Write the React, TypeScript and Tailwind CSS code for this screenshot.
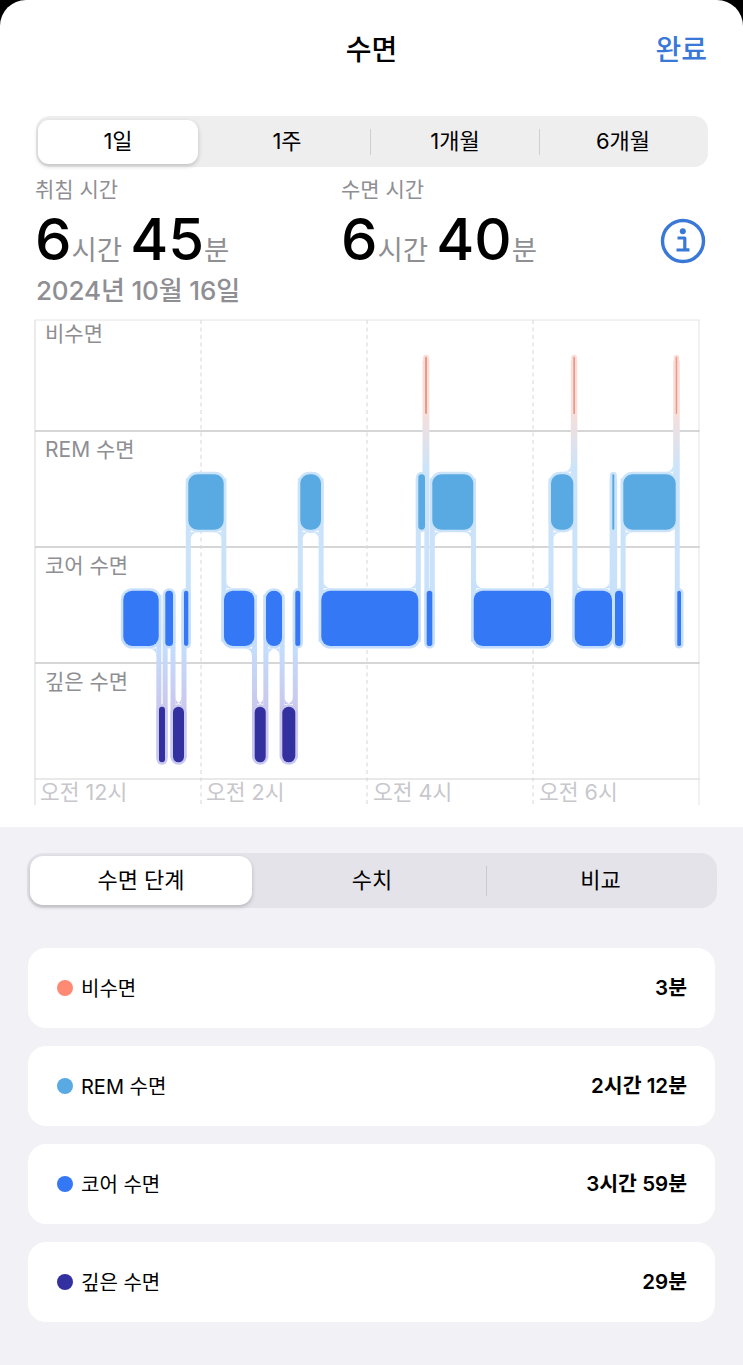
const F = 'font-["Inter","Noto_Sans_CJK_KR",sans-serif]';
import type { ReactNode } from "react";

type Seg = { r: number; a: number; b: number };
const ROWS = [
  { t: 356.7, h: 57.3, c: "#e89a8b" },
  { t: 474.3, h: 55.4, c: "#59aae2" },
  { t: 590.7, h: 55.3, c: "#3478f6" },
  { t: 706.7, h: 55.6, c: "#33309f" },
];
const SEGS: Seg[] = [
  { r: 2, a: 123.3, b: 158.7 }, { r: 3, a: 159, b: 165 }, { r: 2, a: 165.3, b: 173 },
  { r: 3, a: 173, b: 184 }, { r: 2, a: 184, b: 188.3 }, { r: 1, a: 188.3, b: 223.7 },
  { r: 2, a: 224, b: 254.3 }, { r: 3, a: 254.7, b: 265.7 }, { r: 2, a: 266, b: 282 },
  { r: 3, a: 282.3, b: 295.3 }, { r: 2, a: 295.3, b: 300.3 }, { r: 1, a: 300.3, b: 321 },
  { r: 2, a: 321.3, b: 418.3 }, { r: 1, a: 418.3, b: 425 }, { r: 0, a: 425, b: 427 },
  { r: 2, a: 426.7, b: 432.3 }, { r: 1, a: 432.3, b: 473.3 }, { r: 2, a: 473.7, b: 551 },
  { r: 1, a: 551, b: 573.3 }, { r: 0, a: 573.3, b: 575 }, { r: 2, a: 574.7, b: 612 },
  { r: 1, a: 612.3, b: 614.3 }, { r: 2, a: 615, b: 623 }, { r: 1, a: 623.3, b: 675.7 },
  { r: 0, a: 675.7, b: 677.2 }, { r: 2, a: 677.3, b: 681 },
];

function fillet(e: number, h: number, dx: number, dy: number, r = 8) {
  return `M${e} ${h}L${e + dx * r} ${h}Q${e} ${h} ${e} ${h + dy * r}Z`;
}

function SleepChart() {
  const pad = 2.5;
  const yLines = [431, 547, 663];
  const xDash = [201, 367, 533];
  const connectors: ReactNode[] = [];
  const fillets: string[] = [];
  SEGS.forEach((s, i) => {
    const n = SEGS[i + 1];
    if (!n) return;
    const bx = (s.b + n.a) / 2;
    const A = ROWS[s.r];
    const B = ROWS[n.r];
    const top = Math.min(A.t, B.t) + 4;
    const bottom = Math.max(A.t + A.h, B.t + B.h) - 4;
    connectors.push(<rect key={i} x={bx - pad} y={top} width={pad * 2} height={bottom - top} fill="url(#halo)" />);
    const down = n.r > s.r;
    if (s.b - s.a > 8) {
      fillets.push(fillet(bx - pad, (down ? A.t + A.h : A.t) + (down ? pad : -pad), -1, down ? 1 : -1));
    }
    if (n.b - n.a > 8) {
      fillets.push(fillet(bx + pad, (down ? B.t : B.t + B.h) + (down ? -pad : pad), 1, down ? -1 : 1));
    }
  });
  const hours: [number, string][] = [[40, "오전 12시"], [206, "오전 2시"], [373, "오전 4시"], [539, "오전 6시"]];
  const rowLabels: [number, string][] = [[341, "비수면"], [457, "REM 수면"], [573, "코어 수면"], [689, "깊은 수면"]];
  return (
    <svg viewBox="0 310 743 496" width="743" height="496" className="block">
      <defs>
        <linearGradient id="halo" gradientUnits="userSpaceOnUse" x1="0" x2="0" y1="354" y2="765">
          <stop offset="0" stopColor="#fbdcd6" />
          <stop offset="0.14" stopColor="#f8dfda" />
          <stop offset="0.28" stopColor="#cbe4fa" />
          <stop offset="0.55" stopColor="#c9e2fb" />
          <stop offset="0.72" stopColor="#c4dcfd" />
          <stop offset="0.86" stopColor="#c9c8ec" />
          <stop offset="1" stopColor="#c9c8f0" />
        </linearGradient>
      </defs>
      <g stroke="#e4e4e6" strokeWidth="1">
        <line x1="35" x2="699.5" y1="320" y2="320" />
        <line x1="35" x2="35" y1="320" y2="805" strokeWidth="1.5" />
        <line x1="699" x2="699" y1="320" y2="805" />
      </g>
      {yLines.map((y) => <line key={y} x1="35" x2="699.5" y1={y} y2={y} stroke="#c8c8ca" strokeWidth="1.3" />)}
      <line x1="35" x2="699.5" y1="779" y2="779" stroke="#d4d4d6" strokeWidth="1.2" />
      {xDash.map((x) => <line key={x} x1={x} x2={x} y1="320" y2="805" stroke="#d6d6d8" strokeWidth="1" strokeDasharray="4 3.5" />)}
      {connectors}
      <path d={fillets.join("")} fill="url(#halo)" />
      {SEGS.map((s, i) => {
        const R = ROWS[s.r];
        const w = s.b - s.a;
        const p = s.r === 0 ? 1.9 : pad;
        const rad = Math.min(9, w / 2);
        return <rect key={i} x={s.a - p} y={R.t - p} width={w + p * 2} height={R.h + p * 2} rx={rad + p} fill="url(#halo)" />;
      })}
      {SEGS.map((s, i) => {
        const R = ROWS[s.r];
        const w = s.b - s.a;
        return <rect key={i} x={s.a} y={R.t} width={w} height={R.h} rx={Math.min(9, w / 2)} fill={R.c} />;
      })}
      {rowLabels.map(([y, t]) => (
        <text key={t} x="45" y={y} fontSize="21" fill="#8e8e93" fontFamily="Inter, 'Noto Sans CJK KR', sans-serif">{t}</text>
      ))}
      {hours.map(([x, t]) => (
        <text key={t} x={x} y="800" fontSize="21.5" fill="#c7c7cc" fontFamily="Inter, 'Noto Sans CJK KR', sans-serif">{t}</text>
      ))}
    </svg>
  );
}

function InfoIcon() {
  return (
    <svg width="46" height="46" viewBox="0 0 46 46" fill="none">
      <circle cx="23" cy="23" r="20.5" stroke="#3a78d8" strokeWidth="3.4" />
      <circle cx="22.8" cy="13.2" r="3" fill="#3a78d8" />
      <path d="M17.5 20H24.8V31.8H29M16.5 32H29.5" stroke="#3a78d8" strokeWidth="3.2" strokeLinejoin="round" />
    </svg>
  );
}

function Stat({ label, a, b }: { label: string; a: string; b: string }) {
  return (
    <div className="flex flex-col">
      <div className="text-[21px] leading-[26px] text-[#8e8e93]">{label}</div>
      <div className="flex items-baseline mt-[6px] h-[60px]">
        <span className="text-[58px] leading-[60px] font-medium text-black">{a}</span>
        <span className="text-[27.5px] text-[#8e8e93] mr-[8px]">시간</span>
        <span className="text-[58px] leading-[60px] font-medium text-black">{b}</span>
        <span className="text-[27.5px] text-[#8e8e93]">분</span>
      </div>
    </div>
  );
}

function Row({ color, label, value }: { color: string; label: string; value: string }) {
  return (
    <div className="h-[80px] bg-white rounded-[18px] flex items-center justify-between pl-[29px] pr-[28px]">
      <div className="flex items-center gap-2">
        <span className="w-4 h-4 rounded-full" style={{ backgroundColor: color }} />
        <span className="text-[20px] text-black pt-[1px]">{label}</span>
      </div>
      <span className="text-[20.5px] font-semibold text-black pt-[1px]">{value}</span>
    </div>
  );
}

export default function App() {
  return (
    <div className={`w-[743px] h-[1365px] overflow-hidden bg-black ${F}`}>
      <div className="h-[827px] bg-white rounded-t-[26px] flex flex-col">
        <div className="relative h-[97px] pt-[30px] flex justify-center">
          <span className="text-[28px] leading-[40px] font-medium text-black">수면</span>
          <span className="absolute right-[36px] top-[30px] text-[28px] leading-[40px] font-medium text-[#3a78d8]">완료</span>
        </div>
        <div className="ml-[36px] mt-[19px] w-[672px] h-[51px] rounded-[14px] bg-[#eeeeef] grid grid-cols-4 items-center px-[2px] text-[22px] text-black">
          <div className="h-[44px] w-[160px] bg-white rounded-[11px] shadow-[0_2px_5px_rgba(0,0,0,0.2)] flex items-center justify-center">1일</div>
          <div className="flex items-center justify-center h-[26px] -ml-[3px]">1주</div>
          <div className="flex items-center justify-center h-[26px] border-l border-[#cfcfd1] -ml-[2px]">1개월</div>
          <div className="flex items-center justify-center h-[26px] border-l border-[#cfcfd1]">6개월</div>
        </div>
        <div className="mt-[10px] pl-[35px] pr-[37px] flex items-end">
          <div className="w-[306px]"><Stat label="취침 시간" a="6" b="45" /></div>
          <div className="flex-1"><Stat label="수면 시간" a="6" b="40" /></div>
          <div className="mb-[5px]"><InfoIcon /></div>
        </div>
        <div className="pl-[36px] mt-[4px] text-[26px] tracking-[-0.15px] leading-[36px] font-medium text-[#8e8e93]">2024년 10월 16일</div>
        <div className="mt-[1px]"><SleepChart /></div>
      </div>
      <div className="h-[538px] bg-[#f1f1f6] px-[27px] pt-[26px]">
        <div className="h-[55px] w-[690px] rounded-[16px] bg-[#e3e3e9] grid grid-cols-3 items-center px-[3px] text-[22px] text-black">
          <div className="h-[49px] w-[222px] bg-white rounded-[13px] shadow-[0_2px_4px_rgba(0,0,0,0.2)] flex items-center justify-center">수면 단계</div>
          <div className="flex items-center justify-center h-[30px]">수치</div>
          <div className="flex items-center justify-center h-[30px] border-l border-[#c9c9ce]">비교</div>
        </div>
        <div className="mt-[40px] ml-[1px] w-[687px] flex flex-col gap-[18px]">
          <Row color="#fe8a73" label="비수면" value="3분" />
          <Row color="#59aae2" label="REM 수면" value="2시간 12분" />
          <Row color="#3478f6" label="코어 수면" value="3시간 59분" />
          <Row color="#33309f" label="깊은 수면" value="29분" />
        </div>
      </div>
    </div>
  );
}
